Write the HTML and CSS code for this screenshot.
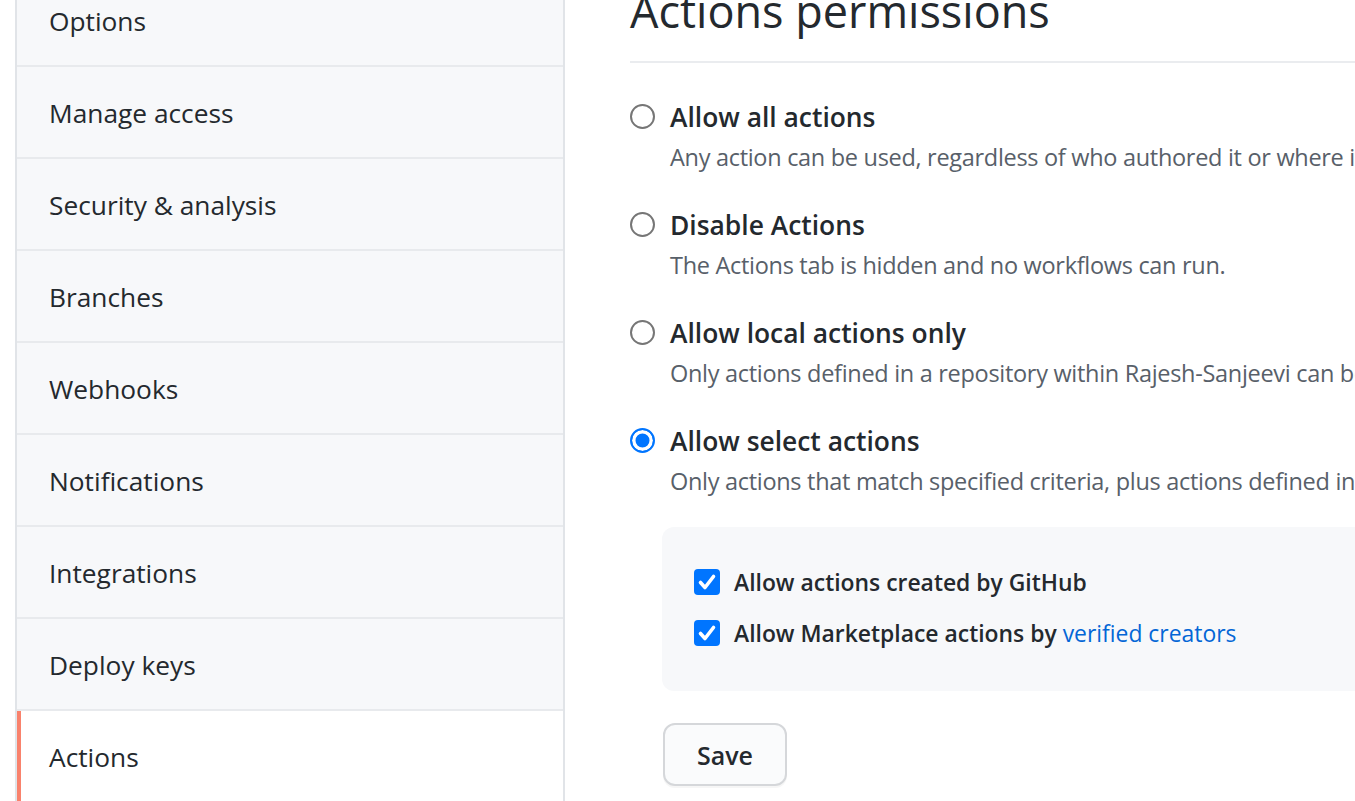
FILE: index.html
```html
<!DOCTYPE html>
<html lang="en">
<head>
<meta charset="utf-8">
<title>Actions permissions</title>
<link rel="stylesheet" href="styles.css">
</head>
<body>
<div class="page">
  <nav class="menu">
    <a class="menu-item">Options</a>
    <a class="menu-item">Manage access</a>
    <a class="menu-item">Security &amp; analysis</a>
    <a class="menu-item">Branches</a>
    <a class="menu-item">Webhooks</a>
    <a class="menu-item">Notifications</a>
    <a class="menu-item">Integrations</a>
    <a class="menu-item">Deploy keys</a>
    <a class="menu-item selected">Actions</a>
  </nav>
  <main class="content">
    <h2 class="subhead">Actions permissions</h2>

    <div class="option">
      <span class="radio"></span>
      <div class="option-body">
        <div class="option-title">Allow all actions</div>
        <div class="note">Any action can be used, regardless of who authored it or where it is defined.</div>
      </div>
    </div>

    <div class="option">
      <span class="radio"></span>
      <div class="option-body">
        <div class="option-title">Disable Actions</div>
        <div class="note">The Actions tab is hidden and no workflows can run.</div>
      </div>
    </div>

    <div class="option">
      <span class="radio"></span>
      <div class="option-body">
        <div class="option-title">Allow local actions only</div>
        <div class="note">Only actions defined in a repository within Rajesh-Sanjeevi can be used.</div>
      </div>
    </div>

    <div class="option">
      <span class="radio checked"></span>
      <div class="option-body">
        <div class="option-title">Allow select actions</div>
        <div class="note">Only actions that match specified criteria, plus actions defined in a repository within Rajesh-Sanjeevi, can be used.</div>
      </div>
    </div>

    <div class="select-box">
      <div class="check-row">
        <span class="checkbox"><svg viewBox="0 0 26 26" width="26" height="26"><polyline points="6.5,13.5 11,18.5 19.5,7.5" fill="none" stroke="#fff" stroke-width="3.6" stroke-linecap="round" stroke-linejoin="round"/></svg></span>
        <span class="check-label">Allow actions created by GitHub</span>
      </div>
      <div class="check-row">
        <span class="checkbox"><svg viewBox="0 0 26 26" width="26" height="26"><polyline points="6.5,13.5 11,18.5 19.5,7.5" fill="none" stroke="#fff" stroke-width="3.6" stroke-linecap="round" stroke-linejoin="round"/></svg></span>
        <span class="check-label">Allow Marketplace actions by <a class="link">verified creators</a></span>
      </div>
    </div>

    <button class="btn">Save</button>
  </main>
</div>
</body>
</html>
```

FILE: styles.css
```css
html, body {
  margin: 0;
  padding: 0;
  background: #ffffff;
  overflow: hidden;
}

body {
  font-family: "Open Sans", "Noto Sans", "Liberation Sans", sans-serif;
  color: #24292e;
}

.page {
  display: flex;
  align-items: flex-start;
  margin-top: -25px;
  padding-left: 15px;
  width: 2000px;
}

.menu {
  flex: 0 0 546px;
  display: flex;
  flex-direction: column;
  background: #f7f8fa;
  border-left: 2px solid #e1e4e8;
  border-right: 2px solid #e1e4e8;
}

.menu-item {
  display: block;
  height: 90px;
  line-height: 92px;
  padding-left: 32px;
  font-size: 26.3px;
  color: #24292e;
  border-bottom: 2px solid #e8eaed;
}

.menu-item.selected {
  background: #ffffff;
  box-shadow: inset 4px 0 0 #f9826c;
  height: 200px;
}

.content {
  margin-left: 65px;
  width: 1200px;
}

.subhead {
  margin: 0 0 34px 0;
  font-size: 45px;
  font-weight: 400;
  line-height: 72px;
  padding-bottom: 14px;
  border-bottom: 2px solid #eaecef;
  color: #24292e;
}

.option {
  display: flex;
  align-items: flex-start;
  margin-bottom: 28px;
}

.radio {
  flex: 0 0 auto;
  box-sizing: border-box;
  width: 25px;
  height: 25px;
  margin-top: 7px;
  margin-right: 15px;
  border-radius: 50%;
  border: 2px solid #767676;
  background: #fff;
}

.radio.checked {
  border: 2.5px solid #0075ff;
  background: #0075ff;
  box-shadow: inset 0 0 0 3.5px #ffffff;
}

.option-title {
  font-size: 26.4px;
  font-weight: 600;
  line-height: 40px;
  color: #24292e;
}

.note {
  font-size: 23.5px;
  letter-spacing: -0.3px;
  line-height: 40px;
  color: #586069;
  white-space: nowrap;
}

.select-box {
  margin: -2px 0 0 32px;
  padding: 35px 32px 38px 32px;
  background: #f7f8fa;
  border-radius: 12px;
  display: flex;
  flex-direction: column;
  gap: 11px;
}

.check-row {
  display: flex;
  align-items: center;
  height: 40px;
}

.checkbox {
  flex: 0 0 auto;
  width: 26px;
  height: 26px;
  border-radius: 4px;
  background: #0075ff;
  margin-right: 14px;
  display: flex;
}

.check-label {
  font-size: 22.9px;
  font-weight: 600;
  color: #24292e;
}

.link {
  color: #0366d6;
  font-weight: 400;
}

.btn {
  display: block;
  margin: 32px 0 0 33px;
  width: 124px;
  height: 63px;
  box-sizing: border-box;
  border: 2px solid #d5d7da;
  border-radius: 12px;
  background: #fafbfc;
  box-shadow: 0 2px 0 rgba(27, 31, 35, 0.04);
  font-family: "Open Sans", "Noto Sans", "Liberation Sans", sans-serif;
  font-size: 25px;
  font-weight: 600;
  color: #24292e;
  padding: 0;
}
```
